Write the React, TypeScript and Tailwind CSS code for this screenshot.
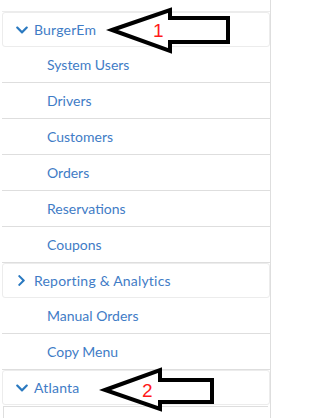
import React from 'react';
import { FaChevronDown, FaChevronRight } from 'react-icons/fa';

const burgerItems = ['System Users', 'Drivers', 'Customers', 'Orders', 'Reservations', 'Coupons'];
const extraItems = ['Manual Orders', 'Copy Menu'];

const SubRow = ({ label }: { label: string }) => (
  <div className="flex h-9 items-center border-b border-[#dedede] pl-[45px] text-[14px] text-[#3f7cc6]">
    {label}
  </div>
);

const HeaderRow = ({ label, open }: { label: string; open: boolean }) => (
  <div className="flex h-[35px] items-center rounded-[3px] border border-[#ececec] bg-white text-[14px] text-[#3f7cc6]">
    <span className="flex w-[31px] justify-center pl-[6px] text-[#2a79c0]">
      {open ? <FaChevronDown size={14} /> : <FaChevronRight size={13} />}
    </span>
    <span className="tracking-[0.2px]">{label}</span>
  </div>
);

// hand drawn callout arrows that sit over the menu
const Arrow = ({ points, num, nx, ny }: { points: string; num: string; nx: number; ny: number }) => (
  <svg className="pointer-events-none absolute left-0 top-0" width="310" height="418">
    <polygon points={points} fill="white" stroke="black" strokeWidth="4" strokeLinejoin="miter" />
    <text x={nx} y={ny} fill="#ff1a1a" fontSize="19" fontFamily="'Liberation Sans', sans-serif">
      {num}
    </text>
  </svg>
);

export default function App() {
  return (
    <div className="relative h-[418px] w-[310px] overflow-hidden bg-white font-['Lato',sans-serif]">
      <div className="w-[271px] border-r border-[#dedede] pl-[2px]">
        <div className="h-[12px] border-b border-[#ececec]" />
        <HeaderRow label="BurgerEm" open />
        {burgerItems.map(item => (
          <SubRow key={item} label={item} />
        ))}
        <HeaderRow label="Reporting & Analytics" open={false} />
        {extraItems.map(item => (
          <SubRow key={item} label={item} />
        ))}
        <HeaderRow label="Atlanta" open />
        <div className="ml-[1px] mr-[2px] mt-[1px] h-[20px] border-l border-t border-[#dedede]" />
      </div>

      <Arrow points="112,30 170,10 170,18 228,18 228,42 170,42 170,51" num="1" nx={153} ny={37} />
      <Arrow points="105,390 160,370 160,380 212,380 212,402 160,402 160,409" num="2" nx={142} ny={397} />
    </div>
  );
}
